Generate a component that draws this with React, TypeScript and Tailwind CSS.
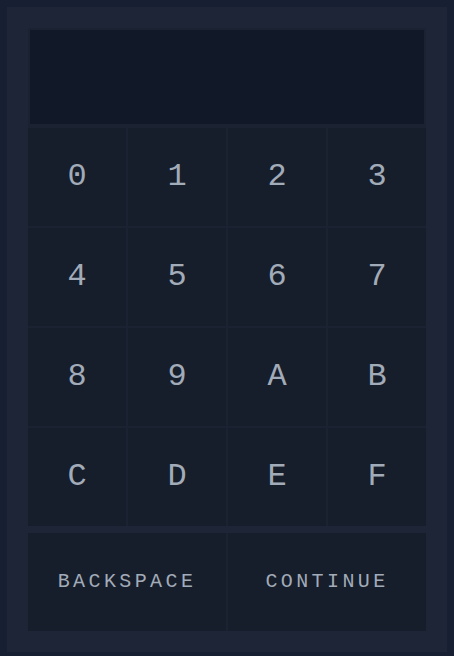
const KEYS = ["0", "1", "2", "3", "4", "5", "6", "7", "8", "9", "A", "B", "C", "D", "E", "F"];

export default function App() {
  return (
    <div
      className="w-[454px] h-[656px] bg-[#172032] pt-[7px] px-[7px]"
      style={{ fontFamily: '"Liberation Mono", "DejaVu Sans Mono", monospace' }}
    >
      <div className="h-[645px] bg-[#1d2537] p-[21px] flex flex-col">
        {/* display + keypad */}
        <div className="flex flex-col gap-[2px] bg-[#1b2333]">
          <div className="h-[98px] bg-[#111827] border-2 border-[#1b2333]" />
          <div className="grid grid-cols-4 gap-[2px]">
            {KEYS.map((k) => (
              <button
                key={k}
                className="h-[98px] bg-[#161d2b] text-[#a2abb8] text-[32px] flex items-center justify-center"
              >
                {k}
              </button>
            ))}
          </div>
        </div>

        <div className="mt-[7px] grid grid-cols-2 gap-[2px] bg-[#1b2333]">
          <button className="h-[98px] bg-[#161d2b] text-[#a2abb8] text-[20px] tracking-[0.17em] flex items-center justify-center">
            BACKSPACE
          </button>
          <button className="h-[98px] bg-[#161d2b] text-[#a2abb8] text-[20px] tracking-[0.17em] flex items-center justify-center">
            CONTINUE
          </button>
        </div>
      </div>
    </div>
  );
}
